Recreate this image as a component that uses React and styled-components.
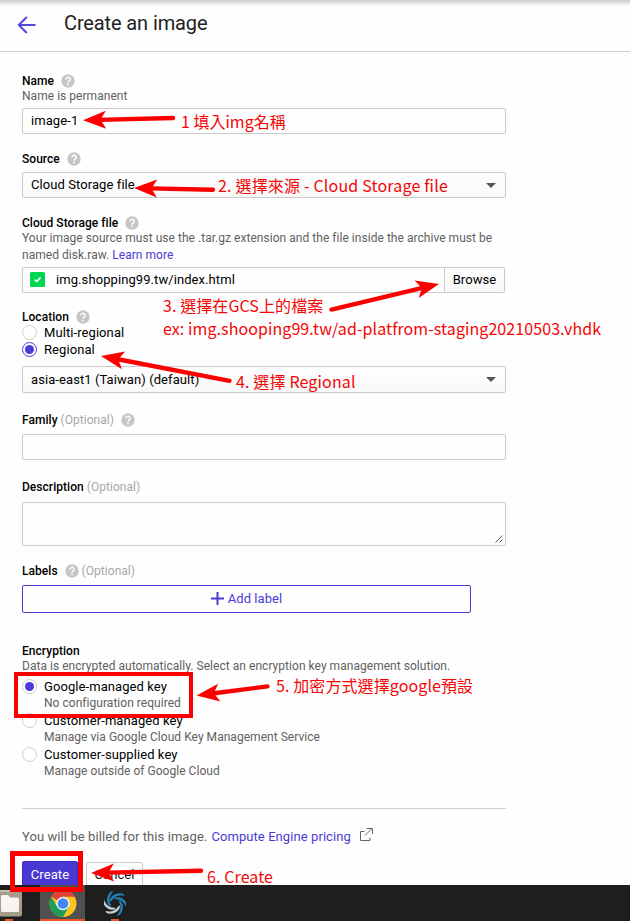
import React from "react";
import styled, { createGlobalStyle } from "styled-components";

const GlobalStyle = createGlobalStyle`
  * { box-sizing: border-box; }
  html, body { margin: 0; padding: 0; }
  body { background: #fefefe; overflow: hidden; }
`;

const Screen = styled.div`
  position: relative;
  width: 630px;
  height: 921px;
  overflow: hidden;
  display: flex;
  flex-direction: column;
  background: #fefefe;
  font-family: Roboto, "Noto Sans CJK TC", sans-serif;
  font-size: 13px;
  letter-spacing: 0.08px;
  color: #000;
`;

const Header = styled.header`
  flex: none;
  height: 52px;
  display: flex;
  align-items: flex-start;
  padding: 12px 0 0 17px;
  gap: 27px;
  border-bottom: 1px solid #d0d0d0;
  background: linear-gradient(#cfcfcf 0, #dcdcdc 2px, #fefefe 6px);
`;

const BackIcon = styled.svg`
  width: 20px;
  height: 26px;
`;

const Title = styled.h1`
  margin: 0;
  font-size: 20px;
  line-height: 22px;
  font-weight: 400;
  letter-spacing: -0.12px;
  color: #212121;
`;

const Form = styled.main`
  flex: none;
  height: 833px;
  overflow: hidden;
  width: 484px;
  margin-left: 22px;
  padding-top: 20px;
`;

const Field = styled.section`
  margin-bottom: ${(p) => p.$after}px;
`;

const Label = styled.div`
  display: flex;
  align-items: center;
  height: 16px;
  padding-top: ${(p) => p.$drop || 0}px;
  font-size: 12px;
  line-height: 16px;
  font-weight: 500;
  letter-spacing: 0.04px;
  margin-bottom: ${(p) => p.$gap || 0}px;
`;

const Optional = styled.span`
  font-weight: 400;
  color: #a8a8a8;
  margin-left: 3px;
`;

const HelpSvg = styled.svg`
  width: 14px;
  height: 14px;
  margin-left: 7px;
  flex: none;
`;

const Hint = styled.p`
  margin: ${(p) => p.$top || 0}px 0 ${(p) => p.$gap || 0}px;
  font-size: 12px;
  line-height: ${(p) => p.$line || 16}px;
  letter-spacing: 0.037px;
  white-space: nowrap;
  color: #616161;
`;

const Link = styled.a`
  color: #4a3bd6;
`;

const TextBox = styled.div`
  display: flex;
  align-items: center;
  height: ${(p) => p.$h || 26}px;
  border: 1px solid #cacaca;
  border-radius: 2px;
  padding: 0 0 ${(p) => (p.$h ? 0 : 2)}px 8px;
  background: #fefefe;
`;

const SelectBox = styled(TextBox)`
  justify-content: space-between;
  padding-right: 9px;
  background: linear-gradient(#fefefe, #f8f8f8);
`;

const Caret = styled.i`
  border: 5px solid transparent;
  border-top-color: #555;
  border-bottom: 0;
  margin-top: ${(p) => p.$drop || 0}px;
`;

const TextArea = styled(TextBox)`
  height: 44px;
  align-items: flex-end;
  justify-content: flex-end;
  padding: 0 2px 2px 0;
`;

const FilePicker = styled.div`
  display: flex;
  width: 483px;
  height: 26px;
  border: 1px solid #cacaca;
  border-radius: 2px;
`;

const FileName = styled.div`
  flex: 1;
  display: flex;
  align-items: center;
  gap: 11px;
  padding: 0 0 1px 7px;
`;

const Browse = styled.div`
  width: 60px;
  border-left: 1px solid #cacaca;
  background: linear-gradient(#fefefe, #f7f7f7);
  display: flex;
  align-items: center;
  justify-content: center;
  padding-bottom: 2px;
`;

const Valid = styled.svg`
  width: 15px;
  height: 15px;
`;

const RadioRow = styled.div`
  display: flex;
  height: ${(p) => p.$h || 17}px;
  gap: 7px;
`;

const Radio = styled.span`
  flex: none;
  width: 15px;
  height: 15px;
  margin-top: 1px;
  border-radius: 50%;
  border: 1px solid ${(p) => (p.$focus ? "#4a3bd6" : "#cfcfcf")};
  display: flex;
  align-items: center;
  justify-content: center;
  &::after {
    content: "";
    width: 9px;
    height: 9px;
    border-radius: 50%;
    background: ${(p) => (p.$on ? "#4a3bd6" : "transparent")};
  }
`;

const RadioText = styled.div`
  line-height: 17px;
`;

const AddLabel = styled.div`
  width: 449px;
  height: 28px;
  border: 1px solid #4a3bd6;
  border-radius: 2px;
  padding-bottom: 2px;
  color: #4a3bd6;
  display: flex;
  align-items: center;
  justify-content: center;
  gap: 4px;
`;

const Divider = styled.hr`
  margin: 28px 0 19px;
  border: 0;
  height: 1px;
  background: #cfcfcf;
`;

const Billing = styled.div`
  display: flex;
  align-items: center;
  height: 17px;
  color: #616161;
  gap: 4px;
`;

const ExternalIcon = styled.svg`
  width: 13px;
  height: 14px;
  margin: -4px 0 0 5px;
`;

const Buttons = styled.div`
  display: flex;
  align-items: flex-start;
  gap: 8px;
  margin-top: 16px;
`;

const Button = styled.div`
  width: ${(p) => (p.$primary ? 56 : 57)}px;
  height: ${(p) => (p.$primary ? 28 : 26)}px;
  margin-top: ${(p) => (p.$primary ? 0 : 1)}px;
  padding-bottom: 2px;
  border-radius: 2px;
  border: 1px solid ${(p) => (p.$primary ? "#3c2ccf" : "#cacaca")};
  background: ${(p) => (p.$primary ? "#4a38d3" : "#fefefe")};
  color: ${(p) => (p.$primary ? "#fff" : "#111")};
  display: flex;
  align-items: center;
  justify-content: center;
`;

const Taskbar = styled.footer`
  flex: none;
  height: 36px;
  background: #1e1e1e;
  display: flex;
`;

const Task = styled.div`
  width: ${(p) => p.$w}px;
  margin-right: ${(p) => p.$after || 0}px;
  background: ${(p) => (p.$active ? "#505050" : "transparent")};
  display: flex;
  flex-direction: column;
  justify-content: space-between;
  align-items: ${(p) => p.$align || "center"};
`;

const TaskMark = styled.i`
  width: ${(p) => p.$w}px;
  margin-left: ${(p) => p.$left || 0}px;
  height: 2px;
  background: #e95420;
`;

const TaskIcon = styled.svg`
  display: block;
  width: ${(p) => p.$w}px;
  height: 34px;
`;

const Note = styled.div`
  position: absolute;
  left: ${(p) => p.$x}px;
  top: ${(p) => p.$y}px;
  font-family: "Noto Sans CJK TC", sans-serif;
  font-size: 16px;
  line-height: 24px;
  letter-spacing: ${(p) => p.$track || 0}px;
  white-space: nowrap;
  color: #f50505;
`;

const Frame = styled.div`
  position: absolute;
  left: ${(p) => p.$x}px;
  top: ${(p) => p.$y}px;
  width: ${(p) => p.$w}px;
  height: ${(p) => p.$h}px;
  border: ${(p) => p.$b}px solid #fc0000;
`;

const Arrows = styled.svg`
  position: absolute;
  left: 0;
  top: 0;
  width: 630px;
  height: 921px;
`;

const Help = () => (
  <HelpSvg viewBox="0 0 14 14">
    <circle cx="7" cy="7" r="6.7" fill="#c6c6c6" />
    <path d="M4.9 5.5a2.1 2.1 0 1 1 3.2 1.7C7.3 7.7 7 8 7 8.8" fill="none" stroke="#fff" strokeWidth="1.5" />
    <rect x="6.2" y="9.7" width="1.6" height="1.5" fill="#fff" />
  </HelpSvg>
);

const arrows = [
  { from: [174, 118], to: [83, 120.3] },
  { from: [214, 189.8], to: [134, 188] },
  { from: [330.5, 309.8], to: [439, 284] },
  { from: [230.5, 381], to: [101, 356] },
  { from: [268.5, 686.3], to: [196.5, 695.5] },
  { from: [202, 870.7], to: [91, 873] },
];

const Arrow = ({ from, to }) => {
  const dx = from[0] - to[0];
  const dy = from[1] - to[1];
  const len = Math.hypot(dx, dy);
  const angle = (Math.atan2(dy, dx) * 180) / Math.PI;
  return (
    <g transform={`translate(${to[0]} ${to[1]}) rotate(${angle})`}>
      <path d={`M16 0H${len - 1}`} stroke="#fc0000" strokeWidth="4.4" strokeLinecap="round" />
      <path d="M0 0L23 -9L17.5 0L23 9Z" fill="#fc0000" />
    </g>
  );
};

const blades = [0, 60, 120, 180, 240, 300];

export default function App() {
  return (
    <Screen>
      <GlobalStyle />
      <Header>
        <BackIcon viewBox="0 0 20 26">
          <path d="M18.5 13H2M9.8 5L1.8 13L9.8 21" fill="none" stroke="#5149df" strokeWidth="2" />
        </BackIcon>
        <Title>Create an image</Title>
      </Header>

      <Form>
        <Field $after={17}>
          <Label $drop={2}>Name <Help /></Label>
          <Hint $gap={4}>Name is permanent</Hint>
          <TextBox>image-1</TextBox>
        </Field>

        <Field $after={17}>
          <Label $gap={5}>Source <Help /></Label>
          <SelectBox>Cloud Storage file<Caret $drop={2} /></SelectBox>
        </Field>

        <Field $after={15}>
          <Label>Cloud Storage file <Help /></Label>
          <Hint $top={-1} $gap={3} $line={17}>
            Your image source must use the .tar.gz extension and the file inside the archive must be<br />
            named disk.raw. <Link>Learn more</Link>
          </Hint>
          <FilePicker>
            <FileName>
              <Valid viewBox="0 0 15 15">
                <rect width="15" height="15" rx="1.5" fill="#00d64f" />
                <path d="M4.7 7.7L6.7 9.6L10.5 5.6" fill="none" stroke="#fff" strokeWidth="1.7" />
              </Valid>
              img.shopping99.tw/index.html
            </FileName>
            <Browse>Browse</Browse>
          </FilePicker>
        </Field>

        <Field $after={19}>
          <Label $drop={2}>Location <Help /></Label>
          <RadioRow><Radio /><RadioText>Multi-regional</RadioText></RadioRow>
          <RadioRow $h={25}><Radio $on $focus /><RadioText>Regional</RadioText></RadioRow>
          <SelectBox $h={27}>asia-east1 (Taiwan) (default)<Caret /></SelectBox>
        </Field>

        <Field $after={19}>
          <Label $gap={6}>Family<Optional>(Optional)</Optional><Help /></Label>
          <TextBox />
        </Field>

        <Field $after={17}>
          <Label $gap={7}>Description<Optional>(Optional)</Optional></Label>
          <TextArea>
            <svg width="8" height="8" viewBox="0 0 8 8">
              <path d="M0.5 7.5L7.5 0.5M4.5 7.5L7.5 4.5" stroke="#555" strokeWidth="1" />
            </svg>
          </TextArea>
        </Field>

        <Field $after={30}>
          <Label $gap={6}>Labels <Help /><Optional>(Optional)</Optional></Label>
          <AddLabel>
            <svg width="13" height="13" viewBox="0 0 13 13">
              <path d="M6.5 0V13M0 6.5H13" stroke="#4a3bd6" strokeWidth="2" />
            </svg>
            Add label
          </AddLabel>
        </Field>

        <Field $after={0}>
          <Label>Encryption</Label>
          <Hint $top={-1} $gap={4}>Data is encrypted automatically. Select an encryption key management solution.</Hint>
          <RadioRow $h={34}>
            <Radio $on />
            <RadioText>Google-managed key<Hint>No configuration required</Hint></RadioText>
          </RadioRow>
          <RadioRow $h={34}>
            <Radio />
            <RadioText>Customer-managed key<Hint>Manage via Google Cloud Key Management Service</Hint></RadioText>
          </RadioRow>
          <RadioRow $h={34}>
            <Radio />
            <RadioText>Customer-supplied key<Hint>Manage outside of Google Cloud</Hint></RadioText>
          </RadioRow>
        </Field>

        <Divider />
        <Billing>
          You will be billed for this image. <Link>Compute Engine pricing</Link>
          <ExternalIcon viewBox="0 0 13 14">
            <path d="M4.5 3.5H0.5V12.5H10V9.5M5 7.5L12 0.5M6.5 0.5H12.5V6" fill="none" stroke="#666" strokeWidth="1" />
          </ExternalIcon>
        </Billing>
        <Buttons>
          <Button $primary>Create</Button>
          <Button>Cancel</Button>
        </Buttons>
      </Form>

      <Taskbar>
        <Task $w={22} $after={18} $align="flex-start">
          <TaskIcon $w={23} viewBox="0 0 23 34">
            <rect x="-4" y="5" width="26" height="26.5" rx="2" fill="#a59c8c" />
            <rect x="-4" y="5" width="26" height="2" rx="1" fill="#c3bbae" />
            <path d="M1 11.5Q1 10 2.5 10H8L10.5 12.5H17.5Q19 12.5 19 14V25.5Q19 27 17.5 27H2.5Q1 27 1 25.5Z" fill="#f7f5f2" />
          </TaskIcon>
          <TaskMark $w={8} $left={5} />
        </Task>
        <Task $w={45} $after={18} $active>
          <TaskIcon $w={28} viewBox="0 0 28 34">
            <circle cx="14" cy="18.5" r="13.5" fill="#fbc51b" />
            <path d="M14 18.5L2.3 11.75A13.5 13.5 0 0 1 25.7 11.75H14Z" fill="#dd4437" />
            <path d="M2.3 11.75A13.5 13.5 0 0 0 14 32L19.9 21.9L14 18.5L8.2 22Z" fill="#1b9d59" />
            <circle cx="14" cy="18.5" r="6.7" fill="#f4f4f4" />
            <circle cx="14" cy="18.5" r="5.3" fill="#4285f4" />
          </TaskIcon>
          <TaskMark $w={45} />
        </Task>
        <Task $w={24}>
          <TaskIcon $w={22} viewBox="-11 -18.5 22 34">
            {blades.map((a) => (
              <path
                key={a}
                d="M-5 -2C-5 -7 0 -11 7 -10C8.5 -9.5 9.5 -8.5 9.5 -7.5C4 -9 -1 -7 -3.5 -2.5Z"
                fill={a === 240 || a === 180 ? "#c9ced2" : "#237fae"}
                transform={`rotate(${a})`}
              />
            ))}
          </TaskIcon>
          <TaskMark $w={8} />
        </Task>
      </Taskbar>

      <Frame $x={14} $y={672} $w={179} $h={46} $b={4} />
      <Frame $x={10} $y={851} $w={73} $h={41} $b={5} />
      <Arrows viewBox="0 0 630 921">
        {arrows.map((a) => <Arrow key={a.to.join()} {...a} />)}
      </Arrows>
      <Note $x={181} $y={109}>1 填入img名稱</Note>
      <Note $x={218} $y={173} $track={0.18}>2. 選擇來源 - Cloud Storage file</Note>
      <Note $x={163} $y={293} $track={0.08}>3. 選擇在GCS上的檔案</Note>
      <Note $x={163} $y={316} $track={0.08}>ex: img.shooping99.tw/ad-platfrom-staging20210503.vhdk</Note>
      <Note $x={236} $y={369} $track={0.15}>4. 選擇 Regional</Note>
      <Note $x={276} $y={673} $track={0.1}>5. 加密方式選擇google預設</Note>
      <Note $x={207} $y={864} $track={0.1}>6. Create</Note>
    </Screen>
  );
}
